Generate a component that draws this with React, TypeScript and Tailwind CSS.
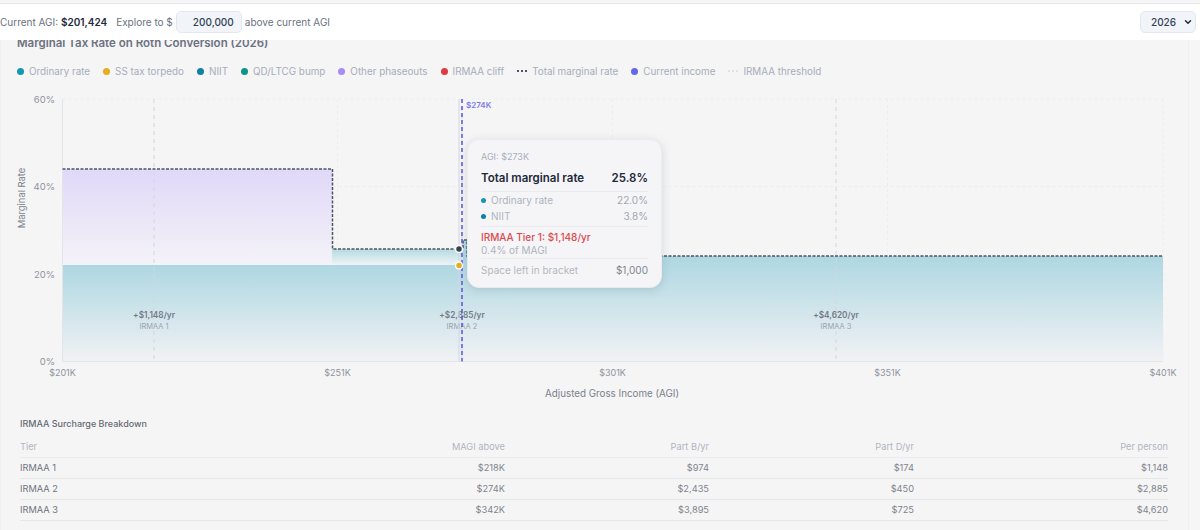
import { ChevronDown } from "lucide-react";

const legend = [
  { label: "Ordinary rate", color: "bg-[#1496b4]" },
  { label: "SS tax torpedo", color: "bg-[#e6ad1f]" },
  { label: "NIIT", color: "bg-[#0e7fa5]" },
  { label: "QD/LTCG bump", color: "bg-[#0d9488]" },
  { label: "Other phaseouts", color: "bg-[#a78bfa]" },
  { label: "IRMAA cliff", color: "bg-[#e03a3e]" },
  { label: "Total marginal rate", line: "dark" },
  { label: "Current income", color: "bg-[#6366f1]" },
  { label: "IRMAA threshold", line: "light" },
];

const rows = [
  ["IRMAA 1", "$218K", "$974", "$174", "$1,148"],
  ["IRMAA 2", "$274K", "$2,435", "$450", "$2,885"],
  ["IRMAA 3", "$342K", "$3,895", "$725", "$4,620"],
];

const yTicks = [
  { label: "60%", y: 99 },
  { label: "40%", y: 186.5 },
  { label: "20%", y: 274 },
  { label: "0%", y: 361.5 },
];

const xTicks = [
  { label: "$201K", x: 62.5 },
  { label: "$251K", x: 337.5 },
  { label: "$301K", x: 612.5 },
  { label: "$351K", x: 887.5 },
  { label: "$401K", x: 1163 },
];

const thresholds = [
  { x: 154, amount: "+$1,148/yr", name: "IRMAA 1" },
  { x: 462, amount: "+$2,885/yr", name: "IRMAA 2" },
  { x: 836, amount: "+$4,620/yr", name: "IRMAA 3" },
];

function Chart() {
  return (
    <svg width="1187" height="310" viewBox="1 90 1187 310" className="block" style={{ fontFamily: "Inter, sans-serif" }}>
      <defs>
        <linearGradient id="teal" x1="0" y1="0" x2="0" y2="1">
          <stop offset="0" stopColor="#aed7e2" />
          <stop offset="1" stopColor="#f1f2f4" />
        </linearGradient>
        <linearGradient id="tealBand" x1="0" y1="0" x2="0" y2="1">
          <stop offset="0" stopColor="#b3dbe2" />
          <stop offset="1" stopColor="#eff3f5" />
        </linearGradient>
        <linearGradient id="purple" x1="0" y1="0" x2="0" y2="1">
          <stop offset="0" stopColor="#e0d8f8" />
          <stop offset="1" stopColor="#f4f3f7" />
        </linearGradient>
      </defs>

      {/* grid */}
      {yTicks.slice(0, 3).map((t) => (
        <line key={t.y} x1="62.5" x2="1163" y1={t.y} y2={t.y} stroke="#ededf0" strokeDasharray="3 3" />
      ))}
      {xTicks.slice(1).map((t) => (
        <line key={t.x} x1={t.x} x2={t.x} y1="99" y2="361.5" stroke="#ededf0" strokeDasharray="3 3" />
      ))}

      {/* areas */}
      <rect x="62.5" y="169" width="270" height="96" fill="url(#purple)" />
      <rect x="62.5" y="265" width="400.5" height="96.5" fill="url(#teal)" />
      <rect x="332" y="249" width="131" height="16" fill="url(#tealBand)" />
      <rect x="463" y="240" width="4" height="16" fill="#aed7e2" />
      <rect x="463" y="256" width="700" height="105.5" fill="url(#teal)" />

      {/* axes */}
      <line x1="62.5" x2="62.5" y1="99" y2="361.5" stroke="#e4e4e7" />
      <line x1="62.5" x2="1163" y1="361.5" y2="361.5" stroke="#e4e4e7" />

      {/* irmaa thresholds */}
      {thresholds.map((t) => (
        <g key={t.x}>
          <line x1={t.x} x2={t.x} y1="99" y2="361.5" stroke="#d5d7db" strokeDasharray="4 4" />
          <text x={t.x} y="318" textAnchor="middle" fontSize="8.25" fontWeight="600" fill="#747a85">{t.amount}</text>
          <text x={t.x} y="329" textAnchor="middle" fontSize="7.5" fill="#9ca3af">{t.name}</text>
        </g>
      ))}

      {/* total rate */}
      <path
        d="M62.5 169H332.5V249H463V240H467V256H1163"
        fill="none"
        stroke="#4b5563"
        strokeWidth="1.5"
        strokeDasharray="3 1.5"
      />

      {/* hover cursor + current income */}
      <line x1="459" x2="459" y1="99" y2="361.5" stroke="#d4d6de" />
      <line x1="462" x2="462" y1="99" y2="361.5" stroke="#5558d9" strokeWidth="1.5" strokeDasharray="4 3" />
      <text x="466" y="108" fontSize="8" fontWeight="600" fill="#7c7ce8">$274K</text>
      <circle cx="459" cy="249" r="3.5" fill="#374151" stroke="#fff" strokeWidth="1.5" />
      <circle cx="459" cy="265.5" r="3.5" fill="#e6ad1f" stroke="#fff" strokeWidth="1.5" />

      {/* tick labels */}
      {yTicks.map((t) => (
        <text key={t.label} x="55" y={t.y + 3.5} textAnchor="end" fontSize="9.5" fill="#8f939b">{t.label}</text>
      ))}
      {xTicks.map((t) => (
        <text key={t.label} x={t.x} y="375.5" textAnchor="middle" fontSize="9" fill="#8f939b">{t.label}</text>
      ))}
      <text x="612" y="396.5" textAnchor="middle" fontSize="9.8" fill="#7b8088">Adjusted Gross Income (AGI)</text>
      <text transform="translate(24.5 198) rotate(-90)" textAnchor="middle" fontSize="9.4" fill="#7b8088">Marginal Rate</text>
    </svg>
  );
}

function ChartTooltip() {
  return (
    <div className="absolute left-[466px] top-[49px] h-[149px] w-[195px] rounded-xl border border-[#ebecef] bg-[#f5f5f7] px-[13px] pt-[10px] shadow-[0_2px_10px_rgba(100,110,130,0.22)]">
      <div className="text-[9px] leading-[14px] text-[#a9aeb8]">AGI: $273K</div>
      <div className="mt-[7px] flex items-center justify-between border-b border-[#ebecef] pb-[6px] text-[11.5px] leading-[14px] font-semibold text-[#1e293b]">
        <span>Total marginal rate</span>
        <span>25.8%</span>
      </div>
      <div className="flex h-[16px] items-center justify-between text-[10px] text-[#aeb3bd]">
        <span className="flex items-center gap-[5px]">
          <span className="h-[5px] w-[5px] rounded-full bg-[#1496b4]" />
          Ordinary rate
        </span>
        <span className="text-[#a2a7b1]">22.0%</span>
      </div>
      <div className="flex h-[16px] items-center justify-between text-[10px] text-[#aeb3bd]">
        <span className="flex items-center gap-[5px]">
          <span className="h-[5px] w-[5px] rounded-full bg-[#0e7fa5]" />
          NIIT
        </span>
        <span className="text-[#a2a7b1]">3.8%</span>
      </div>
      <div className="mt-[2px] border-t border-[#ebecef] pt-[3px] text-[10px] leading-[15px] font-medium text-[#dc4a50]">IRMAA Tier 1: $1,148/yr</div>
      <div className="text-[10px] leading-[11px] text-[#aeb3bd]">0.4% of MAGI</div>
      <div className="mt-[2px] flex items-center justify-between border-t border-[#ebecef] pt-[4px] text-[10px] leading-[14px] text-[#b3b8c1]">
        <span>Space left in bracket</span>
        <span className="text-[#7f848d]">$1,000</span>
      </div>
    </div>
  );
}

export default function App() {
  return (
    <div className="h-[530px] w-[1200px] overflow-hidden bg-[#f6f6f7] font-['Inter',sans-serif]">
      <header className="relative z-10 mt-[3px] -mb-[4px] flex h-[37px] items-center justify-between border-t border-[#e5e7eb] bg-white pr-[4px] text-[10px] text-[#6b7280]">
        <div className="flex items-center">
          <span>
            Current AGI: <b className="font-semibold text-[#1e293b]">$201,424</b>
          </span>
          <span className="ml-[9px]">Explore to $</span>
          <input
            readOnly
            value="200,000"
            className="ml-[3px] h-[22px] w-[66px] rounded-[5px] border border-[#e2e8f0] bg-[#f1f5f9] pr-[7px] text-right text-[10px] font-medium text-[#334155] outline-none"
          />
          <span className="ml-[3px]">above current AGI</span>
        </div>
        <div className="flex h-[22px] w-[56px] items-center justify-between rounded-[5px] border border-[#e2e8f0] bg-[#f1f5f9] pl-[10px] pr-[2px] font-medium text-[#334155]">
          2026
          <ChevronDown size={10} strokeWidth={3.5} className="text-[#1e293b]" />
        </div>
      </header>

      <main className="h-[494px] w-[1189px] border-x border-[#eeeff1] bg-[#f5f5f6]">
        <h2 className="pl-[16px] text-[11.5px] leading-[14px] font-semibold text-[#6b7280]">
          Marginal Tax Rate on Roth Conversion (2026)
        </h2>

        <div className="mt-[14px] flex h-[14px] items-center pl-[16px] text-[9.85px] text-[#a7adb8]">
          {legend.map((item) => (
            <span key={item.label} className="mr-[13px] flex items-center gap-[5px]">
              {item.line === "dark" && <span className="w-[10px] border-t-2 border-dotted border-[#4b5563]" />}
              {item.line === "light" && <span className="w-[10px] border-t-2 border-dotted border-[#dfe1e5]" />}
              {item.color && <span className={`h-[7px] w-[7px] rounded-full ${item.color}`} />}
              {item.label}
            </span>
          ))}
        </div>

        <div className="relative mt-[12px]">
          <Chart />
          <ChartTooltip />
        </div>

        <div className="mt-[18px] px-[19px] text-[9.25px]">
          <h3 className="text-[9px] leading-[12px] font-medium text-[#666b73]">IRMAA Surcharge Breakdown</h3>
          <table className="mt-[7px] w-[1148px] table-fixed border-collapse">
            <colgroup>
              <col className="w-[280px]" />
              <col className="w-[205px]" />
              <col className="w-[204px]" />
              <col className="w-[205px]" />
              <col className="w-[254px]" />
            </colgroup>
            <thead>
              <tr className="h-[20px] border-b border-[#ebecee] text-[#b0b5be]">
                <th className="text-left font-normal">Tier</th>
                <th className="text-right font-normal">MAGI above</th>
                <th className="text-right font-normal">Part B/yr</th>
                <th className="text-right font-normal">Part D/yr</th>
                <th className="text-right font-normal">Per person</th>
              </tr>
            </thead>
            <tbody>
              {rows.map((row) => (
                <tr key={row[0]} className="h-[21px] border-b border-[#e6e7e9] text-[#7f848d]">
                  {row.map((cell, index) => (
                    <td key={index} className={index === 0 ? "text-left text-[#6f747c]" : "text-right"}>
                      {cell}
                    </td>
                  ))}
                </tr>
              ))}
            </tbody>
          </table>
        </div>
      </main>
    </div>
  );
}
